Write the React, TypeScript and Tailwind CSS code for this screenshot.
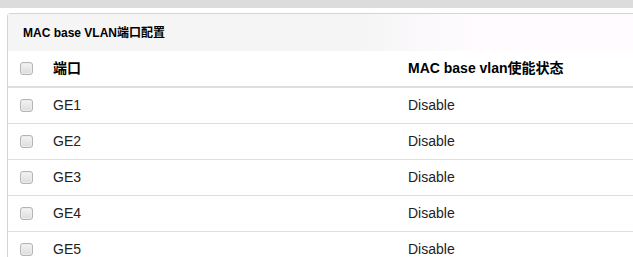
const ports = ['GE1', 'GE2', 'GE3', 'GE4', 'GE5'];

const CheckBox = () => (
  <span className="block h-[13px] w-[13px] rounded-[3px] border border-[#b4b4b4] bg-gradient-to-b from-[#f4f4f4] to-[#dcdcdc] shadow-[inset_0_0_0_1px_#ececec]" />
);

const App = () => {
  return (
    <div className="h-[257px] w-[633px] overflow-hidden bg-white text-[14px] text-[#222] [font-family:'Liberation_Sans','Noto_Sans_CJK_SC',sans-serif]">
      <div className="h-[8px] bg-[#dcdcdc]" />

      <div className="ml-[7px] mt-[5px] rounded-tl-[4px] border-l border-t border-[#d4d4d4]">
        <div className="flex h-[37px] items-center bg-[linear-gradient(to_right,#f5f5f5_55%,#fffbff_75%)] pl-[15px] text-[12px] font-bold text-black">
          MAC base VLAN端口配置
        </div>

        <div className="flex h-[37px] items-center border-b-2 border-[#dedede] font-bold text-black">
          <div className="w-[45px] pl-[12px]">
            <CheckBox />
          </div>
          <div className="w-[355px]">端口</div>
          <div>MAC base vlan使能状态</div>
        </div>

        {ports.map((port) => (
          <div key={port} className="flex h-[36px] items-center border-b border-[#dedede]">
            <div className="w-[45px] pl-[12px]">
              <CheckBox />
            </div>
            <div className="w-[355px]">{port}</div>
            <div>Disable</div>
          </div>
        ))}
      </div>
    </div>
  );
};

export default App;
